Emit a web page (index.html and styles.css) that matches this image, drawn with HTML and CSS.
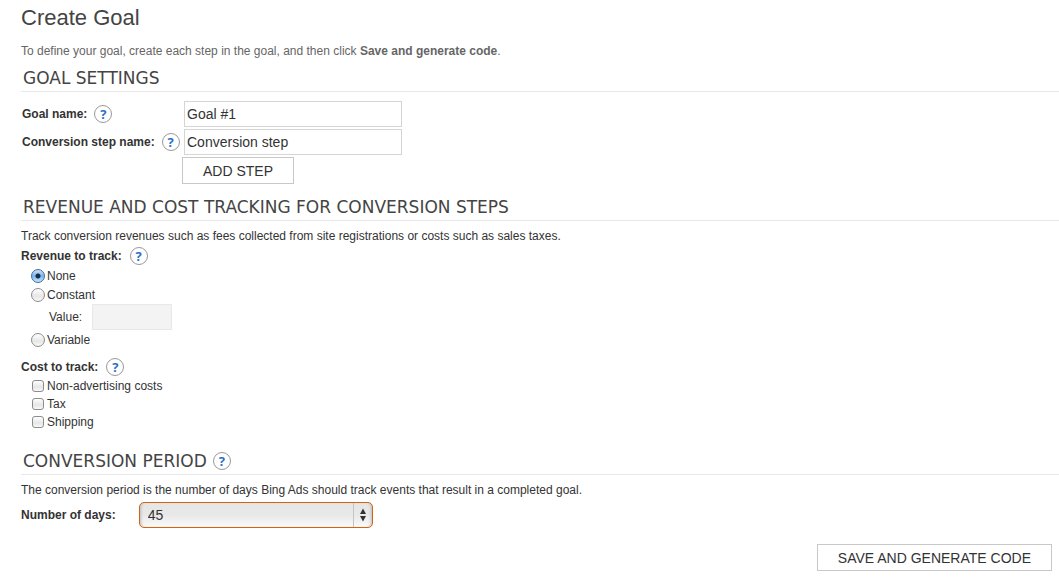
FILE: index.html
```html
<!DOCTYPE html>
<html lang="en">
<head>
    <meta charset="UTF-8">
    <meta name="viewport" content="width=device-width, initial-scale=1.0">
    <title>Create Goal</title>
    <link rel="stylesheet" href="styles.css">
</head>
<body>
    <form class="goal-form">
        <h1>Create Goal</h1>
        <p class="intro">To define your goal, create each step in the goal, and then click <b>Save and generate code</b>.</p>

        <section class="goal-settings">
            <div class="section-title"><h2>GOAL SETTINGS</h2></div>
            <div class="field-row">
                <div class="field-label">
                    <label for="goal-name">Goal name:</label>
                    <button type="button" class="help" aria-label="Help">?</button>
                </div>
                <input type="text" class="text-box" id="goal-name" value="Goal #1">
            </div>
            <div class="field-row">
                <div class="field-label">
                    <label for="step-name">Conversion step name:</label>
                    <button type="button" class="help" aria-label="Help">?</button>
                </div>
                <input type="text" class="text-box" id="step-name" value="Conversion step">
            </div>
            <button type="button" class="btn btn-add">ADD STEP</button>
        </section>

        <section class="tracking">
            <div class="section-title"><h2>REVENUE AND COST TRACKING FOR CONVERSION STEPS</h2></div>
            <p class="description">Track conversion revenues such as fees collected from site registrations or costs such as sales taxes.</p>
            <div class="group-label">
                <span>Revenue to track:</span>
                <button type="button" class="help" aria-label="Help">?</button>
            </div>
            <div class="options revenue">
                <label class="option"><input type="radio" name="revenue" checked>None</label>
                <label class="option"><input type="radio" name="revenue">Constant</label>
                <div class="value-row">
                    <label for="revenue-value">Value:</label>
                    <input type="text" class="value-box" id="revenue-value" disabled>
                </div>
                <label class="option"><input type="radio" name="revenue">Variable</label>
            </div>
            <div class="group-label">
                <span>Cost to track:</span>
                <button type="button" class="help" aria-label="Help">?</button>
            </div>
            <div class="options">
                <label class="option cost"><input type="checkbox">Non-advertising costs</label>
                <label class="option cost"><input type="checkbox">Tax</label>
                <label class="option cost"><input type="checkbox">Shipping</label>
            </div>
        </section>

        <section class="period">
            <div class="section-title">
                <h2>CONVERSION PERIOD</h2>
                <button type="button" class="help" aria-label="Help">?</button>
            </div>
            <p class="description">The conversion period is the number of days Bing Ads should track events that result in a completed goal.</p>
            <div class="days-row">
                <label for="days">Number of days:</label>
                <div class="select-wrap">
                    <select id="days">
                        <option>7</option>
                        <option>15</option>
                        <option>30</option>
                        <option selected>45</option>
                    </select>
                    <svg class="arrows" width="8" height="14" viewBox="0 0 8 14" aria-hidden="true">
                        <path d="M4 0.5 7 6H1zM4 13.5 1 8h6z" fill="#333"/>
                    </svg>
                </div>
            </div>
        </section>

        <div class="actions">
            <button type="submit" class="btn">SAVE AND GENERATE CODE</button>
        </div>
    </form>
</body>
</html>
```
FILE: styles.css
```css
* {
    box-sizing: border-box;
}
body {
    margin: 0;
    background: #fff;
    color: #333;
    font-family: "Liberation Sans", Arial, sans-serif;
    font-size: 12px;
    line-height: 16px;
}
input, select, button {
    margin: 0;
    color: #333;
    font-family: inherit;
}
.goal-form {
    padding: 4px 0 0 21px;
}
h1 {
    margin: 0 0 11px;
    color: #444;
    font-size: 22px;
    font-weight: normal;
    line-height: 28px;
}
.intro {
    margin: 0 0 7px;
    color: #666;
}
.section-title {
    display: flex;
    align-items: center;
    gap: 6px;
    height: 26px;
    padding: 0 0 2px 2px;
    border-bottom: 1px solid #e8e8e8;
}
h2 {
    margin: 0;
    color: #444;
    font-family: "DejaVu Sans", Verdana, sans-serif;
    font-size: 17px;
    font-weight: normal;
    line-height: 24px;
}
.help {
    flex: none;
    width: 18px;
    height: 18px;
    padding: 0;
    border: 1px solid #999;
    border-radius: 50%;
    background: #fff;
    color: #2a6fc9;
    font-family: "Noto Sans", sans-serif;
    font-size: 13px;
    font-weight: bold;
    line-height: 16px;
    text-align: center;
}

/* Goal settings */
.goal-settings {
    margin-bottom: 11px;
}
.goal-settings .section-title {
    margin-bottom: 9px;
}
.field-row {
    display: flex;
    align-items: center;
    margin-bottom: 2px;
}
.field-label {
    display: flex;
    align-items: center;
    gap: 7px;
    width: 163px;
    padding-left: 1px;
    font-weight: bold;
}
.text-box {
    width: 218px;
    height: 26px;
    padding: 0 2px;
    border: 1px solid #d5d5d5;
    background: #fff;
    font-size: 14px;
}
.btn {
    height: 27px;
    padding: 0 20px;
    border: 1px solid #c8c8c8;
    background: #fff;
    font-size: 14px;
}
.btn-add {
    display: block;
    margin-left: 161px;
}

/* Revenue and cost */
.description {
    margin: 7px 0 4px;
}
.tracking .description {
    margin-bottom: 2px;
}
.group-label {
    display: flex;
    align-items: center;
    gap: 8px;
    height: 20px;
    font-weight: bold;
}
.options {
    display: flex;
    flex-direction: column;
    align-items: flex-start;
    padding-left: 10px;
}
.revenue {
    margin-bottom: 8px;
}
.option {
    display: flex;
    align-items: center;
    gap: 2px;
    height: 19px;
}
.option.cost {
    height: 18px;
    padding-left: 1px;
    gap: 3px;
}
input[type="radio"], input[type="checkbox"] {
    appearance: none;
    width: 14px;
    height: 14px;
    border: 1px solid #8c8c8c;
    border-radius: 50%;
    background: linear-gradient(#fff, #e6e6e6 60%, #fafafa);
}
input[type="checkbox"] {
    width: 12px;
    height: 12px;
    border-radius: 3px;
}
input[type="radio"]:checked {
    border-color: #44699c;
    background: radial-gradient(circle, #1c2b40 2px, transparent 3px), linear-gradient(#cfe4fa, #79b3ec 50%, #c0e8ff);
}
.value-row {
    display: flex;
    align-items: center;
    gap: 10px;
    padding-left: 18px;
}
.value-box {
    width: 80px;
    height: 26px;
    border: 1px solid #e8e8e8;
    background: #f3f3f3;
}

/* Conversion period */
.period {
    margin-top: 18px;
}
.days-row {
    display: flex;
    align-items: center;
    gap: 23px;
    font-weight: bold;
}
.select-wrap {
    position: relative;
}
.select-wrap select {
    appearance: none;
    display: block;
    width: 234px;
    height: 26px;
    padding: 0 24px 0 8px;
    border: 1px solid #d2640f;
    border-radius: 5px;
    background: linear-gradient(#c4c4c4, #c4c4c4) right 18px top / 1px 100% no-repeat, linear-gradient(#e6e6e6, #e8e8e8 50%, #fafafa);
    box-shadow: inset 3px 0 3px -2px #bbb, inset -3px 0 3px -2px #bbb;
    font-size: 14px;
}
.arrows {
    position: absolute;
    top: 6px;
    right: 6px;
    pointer-events: none;
}
.actions {
    display: flex;
    justify-content: flex-end;
    padding: 16px 7px 7px 0;
}
```
